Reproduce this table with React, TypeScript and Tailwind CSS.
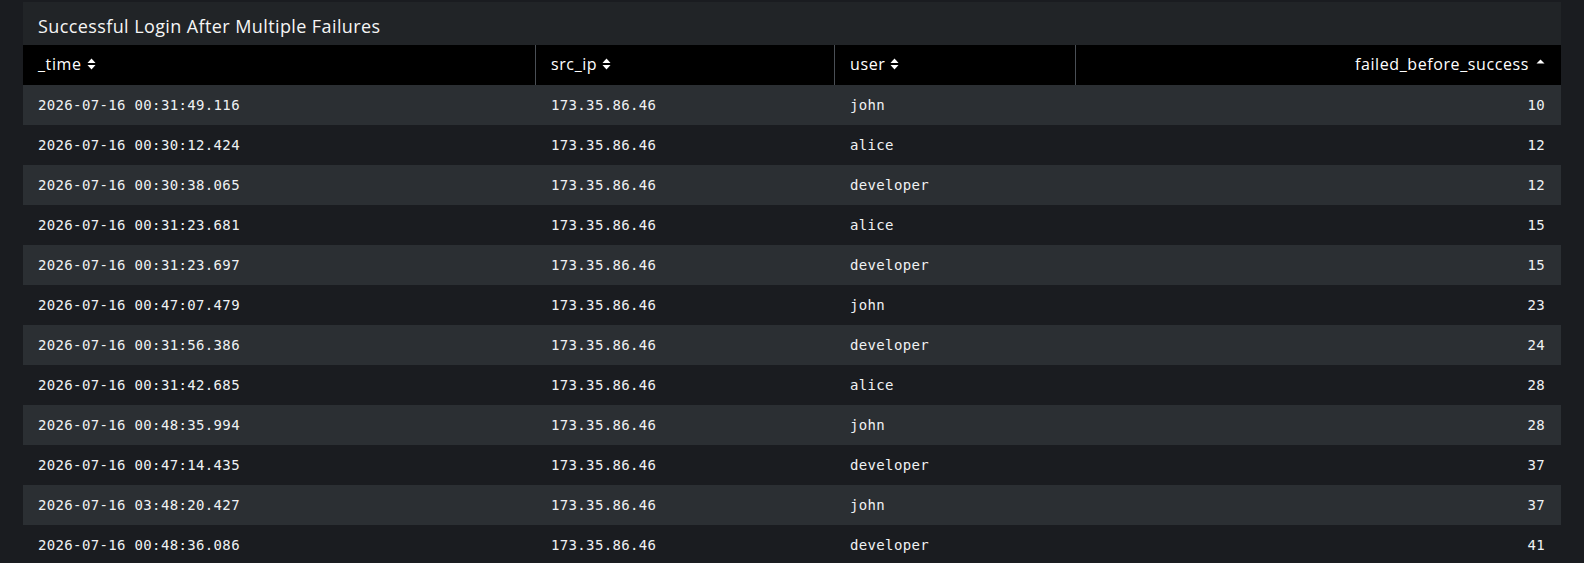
import React from "react";

const rows: [string, string, string, number][] = [
  ["2026-07-16 00:31:49.116", "173.35.86.46", "john", 10],
  ["2026-07-16 00:30:12.424", "173.35.86.46", "alice", 12],
  ["2026-07-16 00:30:38.065", "173.35.86.46", "developer", 12],
  ["2026-07-16 00:31:23.681", "173.35.86.46", "alice", 15],
  ["2026-07-16 00:31:23.697", "173.35.86.46", "developer", 15],
  ["2026-07-16 00:47:07.479", "173.35.86.46", "john", 23],
  ["2026-07-16 00:31:56.386", "173.35.86.46", "developer", 24],
  ["2026-07-16 00:31:42.685", "173.35.86.46", "alice", 28],
  ["2026-07-16 00:48:35.994", "173.35.86.46", "john", 28],
  ["2026-07-16 00:47:14.435", "173.35.86.46", "developer", 37],
  ["2026-07-16 03:48:20.427", "173.35.86.46", "john", 37],
  ["2026-07-16 00:48:36.086", "173.35.86.46", "developer", 41],
];

function SortBoth() {
  return (
    <svg width="9" height="12" viewBox="0 0 9 12" className="ml-[5px]">
      <path d="M4.5 0.5 L8.5 5 L0.5 5 Z" fill="#ffffff" />
      <path d="M4.5 11.5 L8.5 7 L0.5 7 Z" fill="#ffffff" />
    </svg>
  );
}

function SortUp() {
  return (
    <svg width="9" height="12" viewBox="0 0 9 12" className="ml-[7px]">
      <path d="M4.5 1.5 L8.5 5.5 L0.5 5.5 Z" fill="#ffffff" />
    </svg>
  );
}

const grid = "grid grid-cols-[512px_299px_241px_1fr]";
const mono = "font-['DejaVu_Sans_Mono',monospace] text-[14px] tracking-[0.35px]";

export default function App() {
  return (
    <div className="w-[1584px] h-[563px] bg-[#1a1c20] overflow-hidden pt-[2px] pl-[23px] pr-[23px]">
      <div className="w-[1538px] bg-[#1a1c20]">
        <div className="h-[43px] bg-[#212427] flex items-center pt-[6px] pl-[15px] text-[18px] tracking-[0.4px] text-[#f5f5f5] font-['Open_Sans',sans-serif]">
          Successful Login After Multiple Failures
        </div>
        <div className={`${grid} h-[40px] bg-black text-white text-[16px] tracking-[0.6px] font-['Open_Sans',sans-serif]`}>
          <div className="flex items-center pb-[3px] pl-[15px]">_time<SortBoth /></div>
          <div className="flex items-center pb-[3px] pl-[15px] border-l border-[#4a4f55]">src_ip<SortBoth /></div>
          <div className="flex items-center pb-[3px] pl-[15px] border-l border-[#4a4f55]">user<SortBoth /></div>
          <div className="flex items-center pb-[3px] justify-end pr-[16px] border-l border-[#4a4f55]">failed_before_success<SortUp /></div>
        </div>
        {rows.map((r, i) => (
          <div
            key={i}
            className={`${grid} h-[40px] ${i % 2 === 0 ? "bg-[#2b2f33]" : "bg-[#1a1c20]"} text-[#f0f2f4] ${mono}`}
          >
            <div className="flex items-center pl-[15px]">{r[0]}</div>
            <div className="flex items-center pl-[16px]">{r[1]}</div>
            <div className="flex items-center pl-[16px]">{r[2]}</div>
            <div className="flex items-center justify-end pr-[16px]">{r[3]}</div>
          </div>
        ))}
      </div>
    </div>
  );
}
